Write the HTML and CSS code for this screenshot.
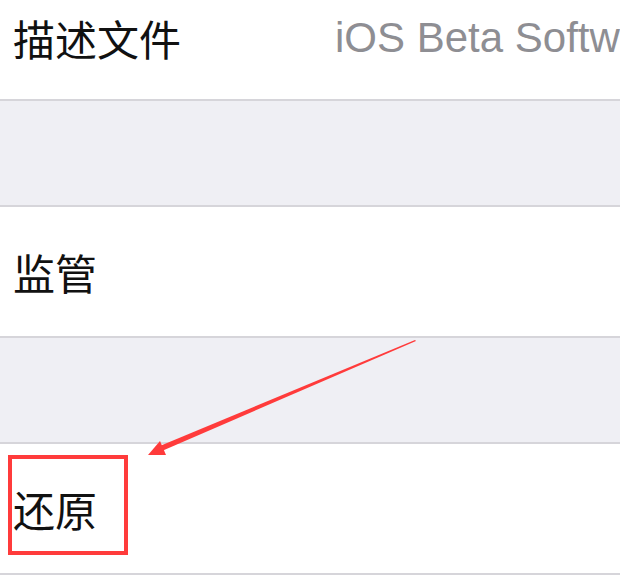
FILE: index.html
```html
<!DOCTYPE html>
<html lang="zh-CN">
<head>
    <meta charset="UTF-8">
    <title>通用</title>
    <link rel="stylesheet" href="styles.css">
</head>
<body>
<div class="screen">
    <div class="cell cell-top">
        <span class="label">描述文件</span>
        <span class="detail">iOS Beta Software Profile</span>
    </div>
    <div class="gap"></div>
    <div class="cell">
        <span class="label">监管</span>
    </div>
    <div class="gap"></div>
    <div class="cell">
        <span class="label">还原</span>
    </div>
    <div class="gap"></div>

    <div class="mark-box"></div>
    <svg class="mark-arrow" width="620" height="575" viewBox="0 0 620 575">
        <polygon points="415,340 416,341 163,450.5 161,445.5" fill="#ff3b3b"/>
        <polygon points="148,455 160,441 166,455" fill="#ff3b3b"/>
    </svg>
</div>
</body>
</html>
```

FILE: styles.css
```css
body {
    margin: 0;
    background: #efeff4;
    font-family: "Liberation Sans", "Noto Sans CJK SC", sans-serif;
}

.screen {
    position: relative;
    width: 620px;
    height: 575px;
    overflow: hidden;
}

.cell {
    display: flex;
    align-items: center;
    height: 129px;
    padding-left: 13px;
    background: #fff;
    border-bottom: 2px solid #d6d5da;
    white-space: nowrap;
    overflow: hidden;
}

.cell-top {
    height: 97px;
    padding-bottom: 2px;
    align-items: flex-start;
}

.cell-top .label,
.cell-top .detail {
    margin-top: 10px;
}

.gap {
    height: 104px;
    border-bottom: 2px solid #d6d5da;
}

.label {
    font-family: "Noto Sans CJK SC", sans-serif;
    font-size: 42px;
    line-height: 56px;
    color: #111;
}

.detail {
    margin-left: 154px;
    font-size: 42px;
    line-height: 56px;
    color: #8e8e93;
}

.mark-box {
    position: absolute;
    left: 8px;
    top: 455px;
    width: 112px;
    height: 92px;
    border: 4px solid #ff3b3b;
}

.mark-arrow {
    position: absolute;
    left: 0;
    top: 0;
}
```
